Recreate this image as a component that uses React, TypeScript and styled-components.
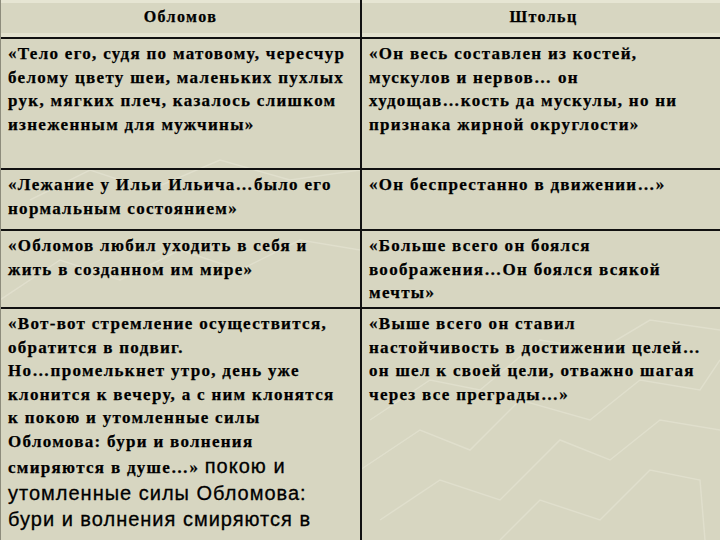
import styled, { createGlobalStyle } from "styled-components";

const GlobalStyle = createGlobalStyle`
  html, body {
    margin: 0;
    padding: 0;
    background: #d7d6c1;
  }
  body {
    width: 720px;
    height: 540px;
    overflow: hidden;
    font-family: "Liberation Serif", "Times New Roman", serif;
    color: #000000;
  }
`;

const Page = styled.div`
  position: relative;
  width: 720px;
  height: 540px;
  overflow: hidden;
  background: #d7d6c1;
`;

const Pattern = styled.svg`
  position: absolute;
  inset: 0;
  pointer-events: none;
`;

const Table = styled.div`
  position: relative;
  width: 724px;
  border-left: 1px solid #8d8c7c;
`;

const Row = styled.div<{ $height: number; $header?: boolean }>`
  display: grid;
  grid-template-columns: 361px 1fr;
  min-height: ${(p) => p.$height}px;
  border-bottom: 2px solid #111111;
  box-shadow: ${(p) => (p.$header ? "inset 0 3px 0 #e6e5d3, inset 0 -4px 0 #e3e2cf" : "none")};
`;

const Cell = styled.div<{ $first?: boolean }>`
  padding: 3px 2px 1px 7px;
  border-right: ${(p) => (p.$first ? "2px solid #111111" : "none")};
  font-weight: 700;
  font-size: 17px;
  line-height: 23.5px;
  letter-spacing: 1.3px;
  -webkit-text-stroke: 0.25px #000000;
`;

const Line = styled.span`
  display: block;
  white-space: nowrap;
`;

const HeadCell = styled(Cell)`
  padding: 0 0 4px;
  display: flex;
  align-items: center;
  justify-content: center;
  font-size: 16px;
  letter-spacing: 1.4px;
`;

const Sans = styled.span`
  font-family: "Liberation Sans", Arial, sans-serif;
  font-weight: 400;
  font-size: 20px;
  line-height: 26px;
  letter-spacing: 1px;
  -webkit-text-stroke: 0.3px #000000;
`;

const SansLine = styled(Line)`
  font-family: "Liberation Sans", Arial, sans-serif;
  font-weight: 400;
  font-size: 20px;
  line-height: 26px;
  letter-spacing: 1px;
  -webkit-text-stroke: 0.3px #000000;
`;

const Lines = ({ items }: { items: string[] }) => (
  <>
    {items.map((t, i) => (
      <Line key={i}>{t}</Line>
    ))}
  </>
);

export default function App() {
  return (
    <>
      <GlobalStyle />
      <Page>
        <Pattern width="720" height="540" viewBox="0 0 720 540">
          <g fill="none" stroke="#e4e3d2" strokeWidth="1.5" opacity="0.7">
            <polyline points="360,470 420,430 470,450 520,400 590,420 640,380 700,390 720,360" />
            <polyline points="380,520 440,480 500,500 560,440 610,460 660,420 720,430" />
            <polyline points="500,540 540,500 600,520 650,470 700,480 705,540" />
            <polyline points="370,420 430,380 480,390 540,340 600,350 650,320 720,330" />
            <polyline points="0,300 60,260 120,280 180,250 240,270 300,240 360,250" />
            <polyline points="30,200 90,170 150,190 220,160 290,180 360,170" />
          </g>
        </Pattern>
        <Table>
          <Row $height={37} $header>
            <HeadCell $first>Обломов</HeadCell>
            <HeadCell>Штольц</HeadCell>
          </Row>
          <Row $height={129}>
            <Cell $first>
              <Lines
                items={[
                  "«Тело его, судя по матовому, чересчур",
                  "белому цвету шеи, маленьких пухлых",
                  "рук, мягких плеч, казалось слишком",
                  "изнеженным для мужчины»",
                ]}
              />
            </Cell>
            <Cell>
              <Lines
                items={[
                  "«Он весь составлен из костей,",
                  "мускулов и нервов… он",
                  "худощав…кость да мускулы, но ни",
                  "признака жирной округлости»",
                ]}
              />
            </Cell>
          </Row>
          <Row $height={59}>
            <Cell $first>
              <Lines items={["«Лежание у Ильи Ильича…было его", "нормальным состоянием»"]} />
            </Cell>
            <Cell>
              <Lines items={["«Он беспрестанно в движении…»"]} />
            </Cell>
          </Row>
          <Row $height={76}>
            <Cell $first>
              <Lines items={["«Обломов любил уходить в себя и", "жить в созданном им мире»"]} />
            </Cell>
            <Cell>
              <Lines
                items={["«Больше всего он боялся", "воображения…Он боялся всякой", "мечты»"]}
              />
            </Cell>
          </Row>
          <Row $height={260}>
            <Cell $first>
              <Lines
                items={[
                  "«Вот-вот стремление осуществится,",
                  "обратится в подвиг.",
                  "Но…промелькнет утро, день уже",
                  "клонится к вечеру, а с ним клонятся",
                  "к покою и утомленные силы",
                  "Обломова: бури и волнения",
                ]}
              />
              <Line>
                смиряются в душе…» <Sans>покою и</Sans>
              </Line>
              <SansLine>утомленные силы Обломова:</SansLine>
              <SansLine>бури и волнения смиряются в</SansLine>
              <SansLine>душе…»</SansLine>
            </Cell>
            <Cell>
              <Lines
                items={[
                  "«Выше всего он ставил",
                  "настойчивость в достижении целей…",
                  "он шел к своей цели, отважно шагая",
                  "через все преграды…»",
                ]}
              />
            </Cell>
          </Row>
        </Table>
      </Page>
    </>
  );
}
